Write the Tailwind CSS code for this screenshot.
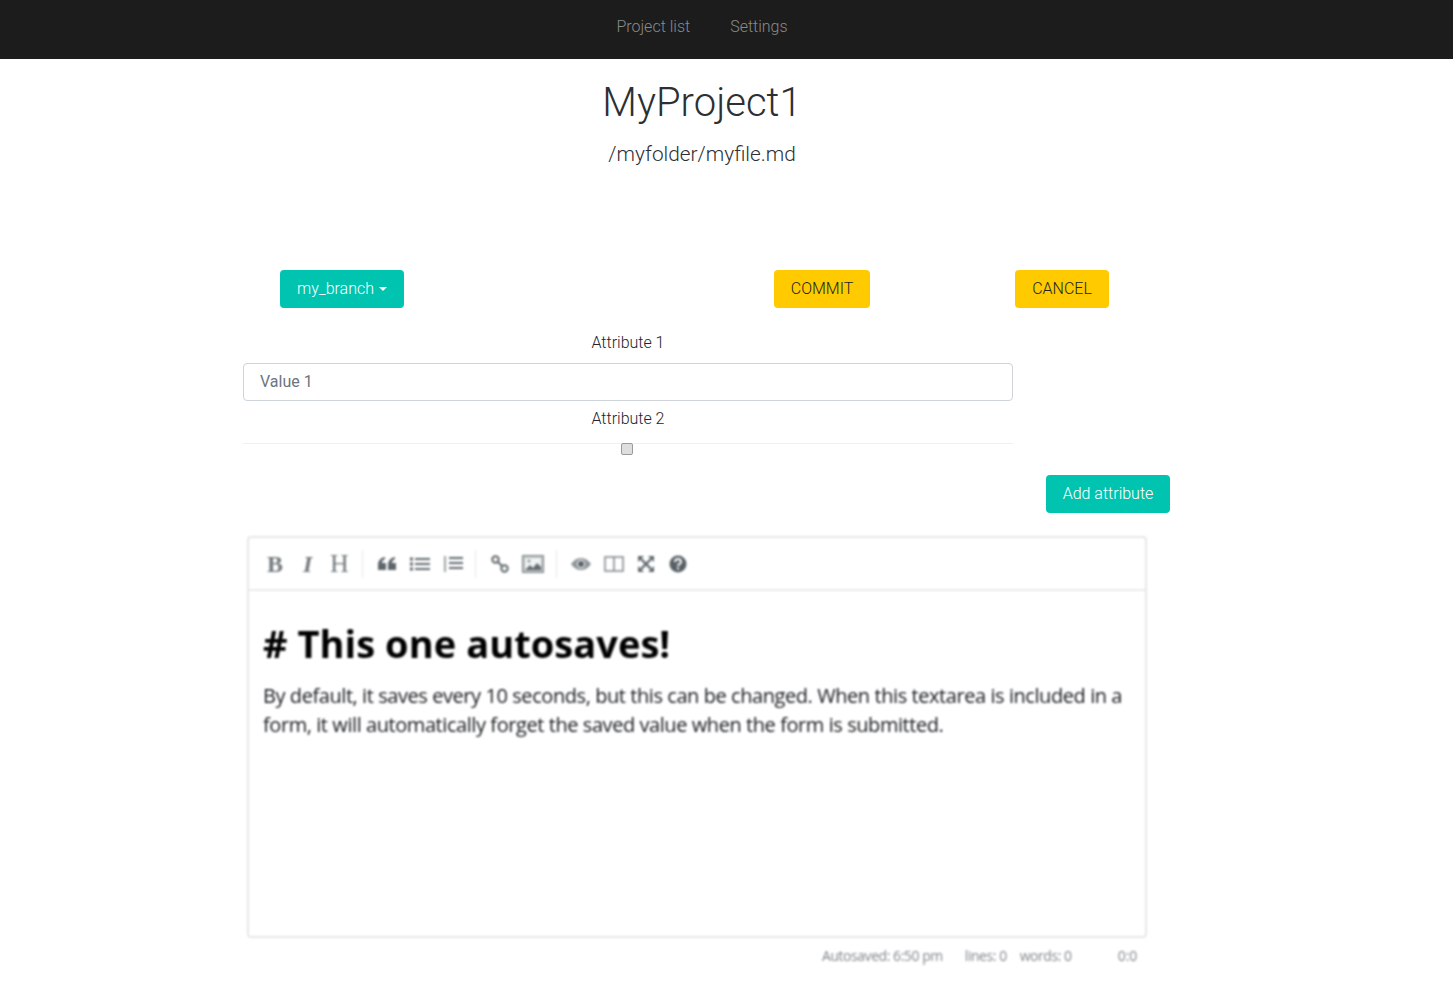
<!DOCTYPE html>
<html lang="en">

<head>
    <meta charset="UTF-8">
    <meta name="viewport" content="width=device-width, initial-scale=1.0">
    <title>MyProject1</title>
    <script src="https://cdn.jsdelivr.net/npm/@tailwindcss/browser@4"></script>
</head>

<body class="bg-white font-['Roboto',sans-serif] font-light text-[#212529]">

    <div id="navBar" class="h-[59px] bg-[#1c1c1c] flex flex-row justify-center items-center gap-10 pr-[49px] pb-[5px] text-[16px] text-[#8a8a8a]">
        <a href="#">Project list</a>
        <a href="#">Settings</a>
    </div>

    <div class="ml-[243px] w-[927px]">

        <div class="w-[917px] text-center">
            <h1 class="text-[40px] leading-[48px] pt-[20px] pl-[1px] text-[#2c3034]">MyProject1</h1>
            <p class="text-[20.8px] leading-[30px] mt-[12px] pl-[1px] text-[#2c3034]">/myfolder/myfile.md</p>
        </div>

        <!-- branch and commit buttons -->
        <div class="flex flex-row items-center h-[38px] mt-[101px] pl-[37px] text-[16px]">
            <button class="w-[124px] h-[38px] rounded bg-[#00c4b0] text-white flex items-center justify-center gap-[5px]">
                my_branch
                <span class="w-0 h-0 border-x-[4.5px] border-x-transparent border-t-[4.5px] border-t-white"></span>
            </button>
            <button class="w-[96px] h-[38px] ml-[370px] rounded bg-[#ffca00] text-[#212529]">COMMIT</button>
            <button class="w-[94px] h-[38px] ml-[145px] rounded bg-[#ffca00] text-[#212529]">CANCEL</button>
        </div>

        <!-- attributes -->
        <div class="w-[770px] mt-[23px] text-[16px]">
            <p class="text-center leading-[24px] h-[32px] text-[#212529]">Attribute 1</p>
            <div class="h-[38px] border border-[#ced4da] rounded px-4 flex items-center font-normal text-[#6c757d]">Value 1</div>
            <p class="text-center leading-[24px] h-[42px] pt-[6px] text-[#212529]">Attribute 2</p>
            <div class="border-t border-[#f0f1f2] h-[11px] flex justify-center">
                <span class="block w-[12px] h-[12px] -ml-[3px] -mt-[1px] rounded-[2px] border border-[#9a9a9a] bg-[#dedede]"></span>
            </div>
        </div>

        <div class="flex justify-end mt-[21px]">
            <button class="w-[124px] h-[38px] rounded bg-[#00c4b0] text-white text-[16px]">Add attribute</button>
        </div>

        <!-- markdown editor screenshot -->
        <div class="w-[900px] ml-[4px] mt-[23px] [filter:blur(0.8px)] font-['Open_Sans',sans-serif] font-normal">
            <div class="h-[402px] border-2 border-[#e6e8e9] rounded-[4px] flex flex-col">
                <div class="h-[53px] border-b-2 border-[#e9ebeb] flex items-center pl-[18px] text-[#5f676c]">
                    <span class="w-[18px] font-['Liberation_Serif',serif] font-bold text-[24px] leading-none text-[#737a7e]">B</span>
                    <span class="w-[14px] ml-[18px] font-['Liberation_Serif',serif] italic font-bold text-[24px] leading-none text-[#737a7e]">I</span>
                    <span class="w-[20px] ml-[13px] font-['Liberation_Serif',serif] text-[26px] leading-none text-[#737a7e]">H</span>
                    <span class="w-px h-[28px] bg-[#e8eaeb] ml-[12px]"></span>
                    <svg class="ml-[14px]" width="20" height="16" viewBox="0 0 20 16" fill="currentColor"><path d="M1 9c0-4 2-7 7-8v2C6 4 5 5 5 7h4v7H1zM11 9c0-4 2-7 7-8v2c-2 1-3 2-3 4h4v7h-8z"/></svg>
                    <svg class="ml-[13px]" width="20" height="16" viewBox="0 0 20 16" fill="none" stroke="currentColor" stroke-width="2"><path d="M5 3h15M5 8h15M5 13h15"/><path d="M0 3h3M0 8h3M0 13h3" stroke-width="3"/></svg>
                    <svg class="ml-[13px]" width="20" height="18" viewBox="0 0 20 18" fill="none" stroke="currentColor"><path d="M6 3h14M6 8h14M6 13h14" stroke-width="2"/><path d="M2 1v16" stroke-width="1.2"/></svg>
                    <span class="w-px h-[28px] bg-[#e8eaeb] ml-[12px]"></span>
                    <svg class="ml-[15px]" width="18" height="18" viewBox="0 0 18 18" fill="none" stroke="currentColor" stroke-width="2"><circle cx="4.5" cy="4.5" r="3.2"/><circle cx="13.5" cy="13.5" r="3.2"/><path d="M7 7l4 4"/></svg>
                    <svg class="ml-[13px]" width="22" height="18" viewBox="0 0 22 18"><rect x="0.5" y="0.5" width="21" height="17" fill="#b8bdc0" stroke="#7b8387"/><rect x="3" y="3" width="16" height="12" fill="#f2f3f3"/><path d="M3 15l5-5 3 3 4-5 4 4v3z" fill="#636b70"/><circle cx="7" cy="6" r="1.5" fill="#8b9296"/></svg>
                    <span class="w-px h-[28px] bg-[#e8eaeb] ml-[12px]"></span>
                    <svg class="ml-[14px]" width="20" height="14" viewBox="0 0 20 14"><path d="M0 7c3-4 6-6 10-6s7 2 10 6c-3 4-6 6-10 6S3 11 0 7z" fill="#8d9498"/><circle cx="10" cy="7" r="4.2" fill="#f4f5f5"/><circle cx="10" cy="7" r="3" fill="#596166"/></svg>
                    <svg class="ml-[13px]" width="20" height="18" viewBox="0 0 20 18" fill="none" stroke="#868d91" stroke-width="1.6"><rect x="1" y="2" width="18" height="14"/><path d="M10 2v14"/></svg>
                    <svg class="ml-[13px]" width="18" height="18" viewBox="0 0 18 18" fill="currentColor"><path d="M4 4l10 10M14 4L4 14" stroke="currentColor" stroke-width="2.4"/><path d="M1 1h6L1 7zM17 1h-6l6 6zM1 17h6l-6-6zM17 17h-6l6-6z"/></svg>
                    <svg class="ml-[14px]" width="18" height="18" viewBox="0 0 18 18"><circle cx="9" cy="9" r="8.5" fill="#596166"/><path d="M6 7c0-4 6-4 6 0 0 2-3 2-3 4" fill="none" stroke="#fff" stroke-width="2"/><rect x="8" y="12.4" width="2" height="2" fill="#fff"/></svg>
                </div>
                <div class="pl-[14px] pt-[28px]">
                    <p class="font-bold text-[38px] leading-[48px] tracking-[0.05px] text-[#000000]">#&nbsp;This one autosaves!</p>
                    <p class="w-[870px] mt-[14px] text-[20px] leading-[29px] tracking-[-0.43px] text-[#15191b]">By default, it saves every 10 seconds, but this can be changed. When this textarea is included in a form, it will automatically forget the saved value when the form is submitted.</p>
                </div>
            </div>
            <div class="h-[36px] flex items-center text-[14px] tracking-[-0.45px] text-[#80868a] pb-[2px]">
                <span class="ml-[575px]">Autosaved: 6:50 pm</span>
                <span class="ml-[22px]">lines: 0</span>
                <span class="ml-[13px]">words: 0</span>
                <span class="ml-[46px] tracking-[0px]">0:0</span>
            </div>
        </div>
    </div>
</body>

</html>
